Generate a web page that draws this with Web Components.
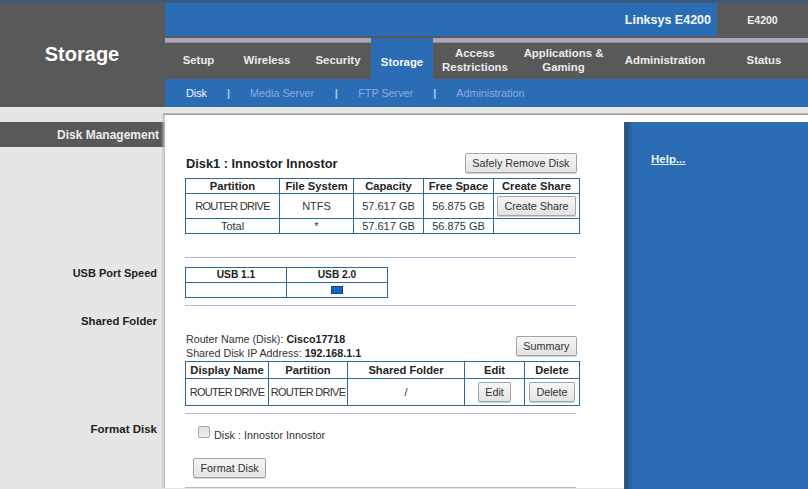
<!DOCTYPE html>
<html lang="en"><head><meta charset="utf-8"><title>Storage</title>
<style>
html,body{margin:0;padding:0;background:#e6e6e6;height:489px;overflow:hidden}
body{font:11px "Liberation Sans",Arial,sans-serif;color:#222;width:808px}
</style></head><body>
<ls-header product="Linksys E4200" model="E4200" page="Storage"></ls-header>
<ls-page>
  <ls-section label="Disk Management" kind="band" height="143">
    <ls-disk-head title="Disk1 : Innostor Innostor" action="Safely Remove Disk"></ls-disk-head>
    <ls-table cols="94,74,70,70,86" heads="Partition|File System|Capacity|Free Space|Create Share" rows="ROUTER DRIVE|NTFS|57.617 GB|56.875 GB|[Create Share];Total|*|57.617 GB|56.875 GB|" row-heights="24,14"></ls-table>
  </ls-section>
  <ls-section label="USB Port Speed" height="48" label-top="8" label-size="11">
    <ls-usb></ls-usb>
  </ls-section>
  <ls-section label="Shared Folder" height="108" label-top="8" label-size="11.3">
    <ls-share-info></ls-share-info>
    <ls-table cols="83,79,117,60,55" heads="Display Name|Partition|Shared Folder|Edit|Delete" rows="ROUTER DRIVE|ROUTER DRIVE|/|[Edit]|[Delete]" row-heights="26" head-height="16"></ls-table>
  </ls-section>
  <ls-section label="Format Disk" height="74" label-top="8">
    <ls-format></ls-format>
  </ls-section>
</ls-page>
<script>
function def(name, css, html, init){
  customElements.define(name, class extends HTMLElement{
    connectedCallback(){
      if(this.shadowRoot) return;
      const r=this.attachShadow({mode:'open'});
      r.innerHTML='<style>'+css+'</style>'+(typeof html==='function'?html(this):html);
      if(init) init(this,r);
    }
  });
}
const F='"Liberation Sans",Arial,sans-serif';

def('ls-button',`:host{display:inline-block;line-height:0;vertical-align:middle}
.b{font:10.8px ${F};color:#333;height:20px;box-sizing:border-box;padding:0 6.5px;border:1px solid #a3a3a3;border-radius:2px;background:linear-gradient(#f6f6f6,#e3e3e3);box-shadow:0 1px 0 #d0d0d0;margin:0;display:inline-block}`,
  `<button class="b" type="button"><slot></slot></button>`);

def('ls-header',`
:host{display:grid;grid-template-columns:165px 1fr;width:808px;height:107px;background:#595959;border-top:3px solid #3b5a7c;box-sizing:border-box}
.title{display:flex;align-items:center;justify-content:center;color:#fff;font:bold 20px ${F};padding:0 1px 2px 0;box-sizing:border-box}
.r{display:flex;flex-direction:column;min-width:0}
.top{display:flex;height:33px}
.prod{width:552px;background:#2a6db5;color:#f2f6fb;font:bold 12.5px ${F};display:flex;align-items:center;justify-content:flex-end;padding-right:6px;box-sizing:border-box}
.model{flex:1;display:flex;align-items:center;justify-content:center;color:#f0f0f0;font:bold 10.5px ${F};padding-top:1px}
.gap{height:2px;background:#595959}
nav{display:flex;height:41px}
.t{box-sizing:border-box;display:flex;align-items:center;justify-content:center;text-align:center;color:#ececec;font:bold 11.4px/14px ${F};border-top:4px solid #a9a6bd;box-shadow:inset 0 1px 0 #8e8e8e;padding-bottom:2px}
.t.on{background:#2a6db5;border-top:0;box-shadow:none;color:#f4f8fc;padding-top:7px;padding-bottom:0}
.sub{flex:1;background:#2a6db5;display:flex;align-items:center;padding-left:21px;font:10.8px ${F};color:#8da9e2}
.sub b{color:#f0f5fb;font-weight:normal}
.sub i{font-style:normal;font-weight:bold;color:#a8d0f0;width:43px;text-align:center}
.sub i.w{width:44px}
`,el=>`
<div class="title">${el.getAttribute('page')}</div>
<div class="r">
 <div class="top"><div class="prod">${el.getAttribute('product')}</div><div class="model">${el.getAttribute('model')}</div></div>
 <div class="gap"></div>
 <nav>
  <div class="t" style="width:67px">Setup</div>
  <div class="t" style="width:70px">Wireless</div>
  <div class="t" style="width:69px;padding-left:3px">Security</div>
  <div class="t on" style="width:62px">Storage</div>
  <div class="t" style="width:84px">Access<br>Restrictions</div>
  <div class="t" style="width:93px">Applications &amp;<br>Gaming</div>
  <div class="t" style="width:110px">Administration</div>
  <div class="t" style="width:88px">Status</div>
 </nav>
 <div class="sub"><b>Disk</b><i>|</i><span>Media Server</span><i class="w">|</i><span>FTP Server</span><i>|</i><span>Administration</span></div>
</div>`);

def('ls-page',`
:host{display:flex;width:808px;height:382px;background:#e6e6e6;padding-top:8px;box-sizing:border-box;position:relative}
:host::before{content:"";position:absolute;left:163px;right:0;top:6px;height:2px;background:linear-gradient(#c8c8c8,#8f8f8f);z-index:2}
.m{width:624px;flex:none}
.h{flex:1;background:#fff;padding-top:7px}
.p{background:linear-gradient(90deg,#4a5a6c 0,#24527f 2px,#2a6db5 9px);height:100%;padding:31px 0 0 27px;box-sizing:border-box}
a{color:#e6f2fb;font:bold 11.5px ${F};text-decoration:underline}
`,`<div class="m"><slot></slot></div><div class="h"><div class="p"><a href="#">Help...</a></div></div>`);

def('ls-section',`
:host{display:flex;width:624px}
.l{width:165px;flex:none;box-sizing:border-box;font:bold 11.5px/14px ${F};color:#222;text-align:right;padding-right:8px}
.l.hasband{padding-right:0}
.band{background:#595959;color:#eee;font-size:12px;height:25px;line-height:26px;padding-right:6px;margin-top:7px;box-sizing:border-box}
.c{width:459px;flex:none;background:#fff;padding-left:20px;position:relative;box-sizing:border-box;display:flex;flex-direction:column}
.c::before{content:"";position:absolute;left:-4px;top:0;bottom:0;width:4px;background:linear-gradient(90deg,transparent,#bdbdbd)}
.rule{position:absolute;left:20px;bottom:0;width:391px;height:1px;background:#b9b7d6}
`,el=>{
  const band=el.getAttribute('kind')==='band', top=el.getAttribute('label-top')||0;
  const size=el.getAttribute('label-size');
  return `<div class="l ${band?'hasband':''}" style="padding-top:${top}px;${size?`font-size:${size}px`:''}"><div class="${band?'band':''}">${el.getAttribute('label')}</div></div>
  <div class="c" style="height:${el.getAttribute('height')}px"><slot></slot><div class="rule"></div></div>`;
});

def('ls-disk-head',`
:host{display:flex;justify-content:space-between;align-items:center;width:392px;margin-top:38px;height:20px;margin-bottom:5px}
h2{margin:0 0 0 1px;font:bold 12.8px ${F};color:#222}
`,el=>`<h2>${el.getAttribute('title')}</h2><ls-button>${el.getAttribute('action')}</ls-button>`);

def('ls-table',`
:host{display:block;width:395px}
table{border-collapse:collapse;table-layout:fixed;width:395px;font:11px/14px ${F};color:#333}
td,th{border:1px solid #2a6b96;padding:0;text-align:center;white-space:nowrap}
th{font-weight:bold;font-size:11.2px;color:#222}
.caps{letter-spacing:-.7px}
`,el=>{
  const cols=el.getAttribute('cols').split(','), hs=el.getAttribute('heads').split('|');
  const rh=el.getAttribute('row-heights').split(',');
  const rows=el.getAttribute('rows').split(';');
  const hh=el.getAttribute('head-height')||14;
  return `<table><colgroup>${cols.map(c=>`<col style="width:${c}px">`).join('')}</colgroup>
  <tr>${hs.map(h=>`<th style="height:${hh}px">${h}</th>`).join('')}</tr>
  ${rows.map((r,i)=>`<tr>${r.split('|').map(c=>{
    const m=c.match(/^\[(.*)\]$/);
    const caps=c==='ROUTER DRIVE'?' class="caps"':'';
    return `<td${caps} style="height:${rh[i]}px">${m?`<ls-button>${m[1]}</ls-button>`:c}</td>`;
  }).join('')}</tr>`).join('')}</table>`;
});

def('ls-usb',`
:host{display:block;width:203px;margin-top:9px}
table{border-collapse:collapse;table-layout:fixed;width:203px;font:bold 10.2px/14px ${F};color:#222}
td,th{border:1px solid #2a6b96;padding:0;text-align:center;height:14px;vertical-align:middle}
i{display:block;margin:0 auto;width:10px;height:6px;background:#1a63c8;border:1px solid #1d3f6e}
`,`<table><tr><th>USB 1.1</th><th>USB 2.0</th></tr><tr><td></td><td><i></i></td></tr></table>`);

def('ls-share-info',`
:host{display:flex;justify-content:space-between;align-items:flex-start;width:392px;height:29px;margin-top:26px;font:10.7px/14px ${F};color:#333}
.t{padding-left:1px}
b{color:#222}
ls-button{align-self:flex-end;margin-bottom:5px}
`,`<div class="t">Router Name (Disk): <b>Cisco17718</b><br>Shared Disk IP Address: <b>192.168.1.1</b></div><ls-button>Summary</ls-button>`);

def('ls-format',`
:host{display:block;font:10.8px/14px ${F};color:#333}
.r{display:flex;align-items:flex-start;padding:12px 0 0 13px;gap:4px;height:20px}
.cb{width:12px;height:12px;box-sizing:border-box;border:1px solid #a8a8a8;border-radius:2px;background:linear-gradient(#dedede,#f0f0f0);margin:0;appearance:none;display:block}
span{padding-top:2px}
.f{padding:12px 0 0 8px}
`,`<div class="r"><input class="cb" type="checkbox"><span>Disk : Innostor Innostor</span></div><div class="f"><ls-button>Format Disk</ls-button></div>`);
</script>
</body></html>
